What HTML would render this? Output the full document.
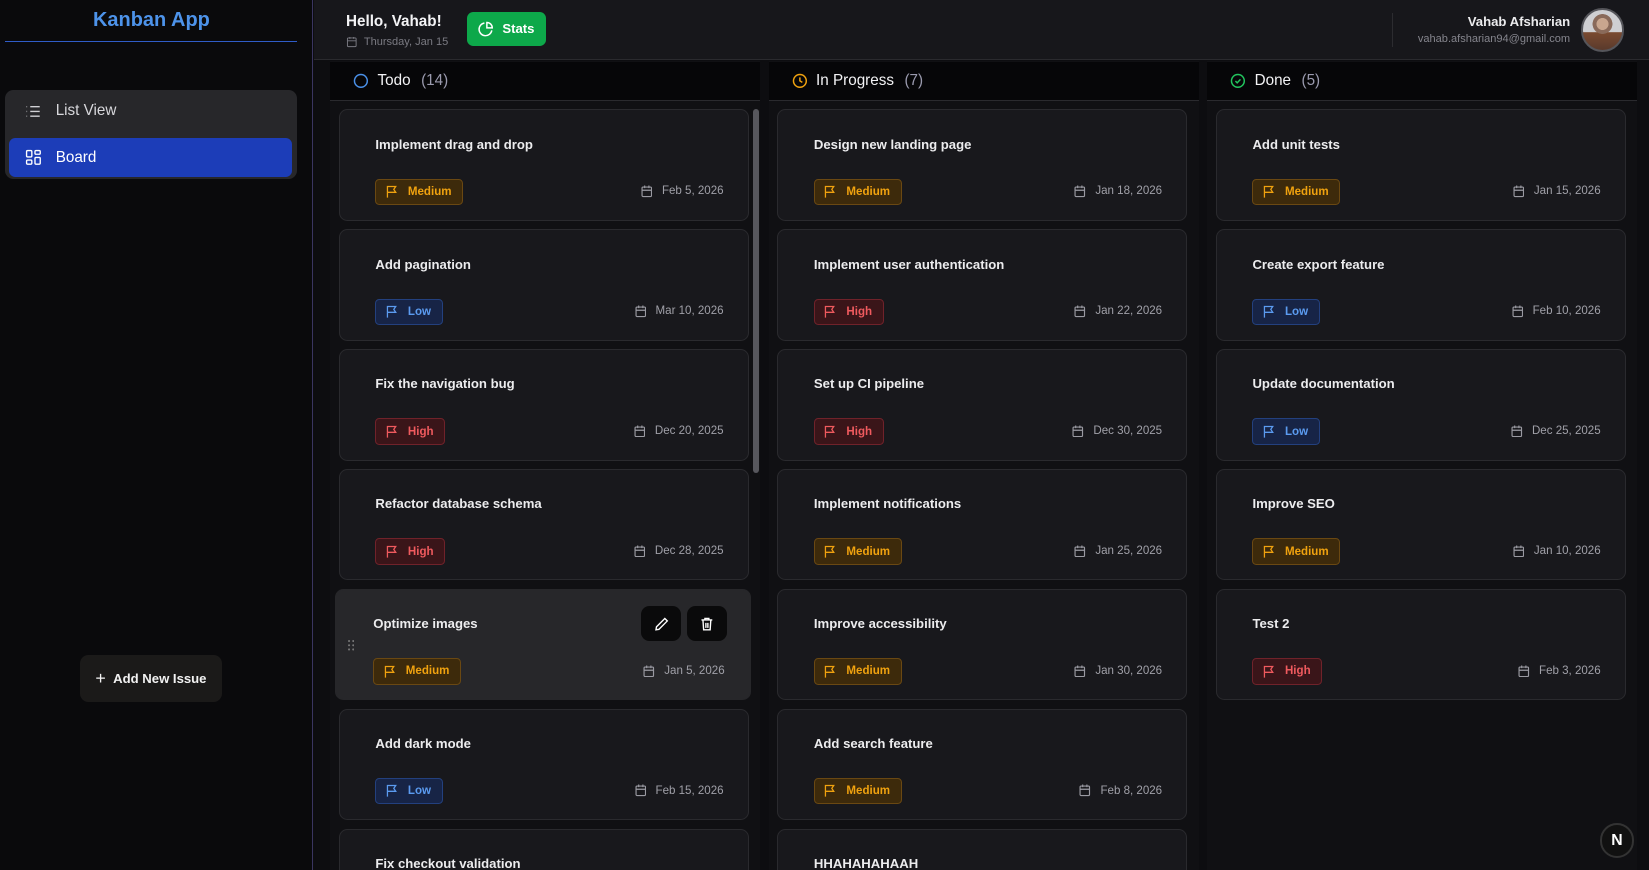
<!DOCTYPE html>
<html><head><meta charset="utf-8"><style>
*{box-sizing:border-box;margin:0;padding:0}
html,body{width:1649px;height:870px;overflow:hidden;background:#0d0d10}
body{font-family:"Liberation Sans",sans-serif;color:#e5e5e7}
#root{zoom:1.05166;width:1568px;height:827px;position:relative;overflow:hidden;background:#0d0d10}
.abs{position:absolute}
.side{left:0;top:0;width:298px;height:827px;background:#0a0a0c;border-right:1px solid #3a3560}
.logo{left:0;width:288px;top:9px;text-align:center;color:#4d93ea;font-weight:bold;font-size:19px}
.hr{left:5px;top:39px;width:277px;height:1px;background:#2f5cc8}
.nav{left:5px;top:86px;width:277px;height:84px;background:#27272a;border-radius:8px}
.navi{position:absolute;left:4px;width:269px;height:37px;border-radius:6px;font-size:14.5px;display:flex;align-items:center;padding-left:15px;gap:13px}
.add{left:76px;top:623px;width:135px;height:45px;background:#1b1a19;border-radius:8px;font-size:12.5px;font-weight:bold;color:#f2f2f2;display:flex;align-items:center;justify-content:center;gap:7px}
.head{left:299px;top:0;width:1269px;height:57px;background:#17171b;border-bottom:1px solid #2a2a2e}
.col{top:58px;width:409px;height:769px;background:#101013}
.ch{left:0;top:1px;width:100%;height:37px;background:#060608;border-bottom:1px solid #2a2a2e;display:flex;align-items:center;padding-left:22px;gap:8px;font-size:14.5px;color:#f3f3f5}
.ch .n{color:#9a9aae;margin-left:2px}
.card{position:absolute;left:8px;width:390px;height:106px;background:#18181c;border:1px solid #2a2a2e;border-radius:8px}
.t{position:absolute;left:34px;top:25px;font-size:12.5px;font-weight:bold;color:#ececee}
.b{position:absolute;left:34px;top:65px;height:25px;border-radius:4px;font-size:11px;font-weight:bold;display:flex;align-items:center;padding:0 10px 0 8px;gap:9px}
.M{background:#3d2a0b;border:1px solid #6a4812;color:#f0a20f}
.L{background:#172446;border:1px solid #23407e;color:#5b9bf0}
.H{background:#3a1519;border:1px solid #70222a;color:#ef5a5e}
.d{position:absolute;right:23px;top:71px;font-size:11px;color:#a0a0a8;display:flex;align-items:center;gap:9px}
</style></head><body><div id="root">
<div class="abs side"></div>
<div class="abs logo">Kanban App</div>
<div class="abs hr"></div>
<div class="abs nav">
 <div class="navi" style="top:1px;color:#d8d8dc"><svg width="16" height="16" viewBox="0 0 16 16" fill="none" stroke="#d0d0d4" stroke-width="1.3"><path d="M5 3.5h9M5 8h9M5 12.5h9M1.5 3.5h.5M1.5 8h.5M1.5 12.5h.5"/></svg>List View</div>
 <div class="navi" style="top:45px;background:#1c3db8;color:#fff"><svg width="16" height="16" viewBox="0 0 16 16" fill="none" stroke="#fff" stroke-width="1.3"><rect x="1.5" y="1.5" width="5" height="6" rx="1"/><rect x="9.5" y="1.5" width="5" height="3.5" rx="1"/><rect x="1.5" y="10.5" width="5" height="4" rx="1"/><rect x="9.5" y="8" width="5" height="6.5" rx="1"/></svg>Board</div>
</div>
<div class="abs add"><span style="font-size:17px;font-weight:normal">+</span>Add New Issue</div>

<div class="abs head"></div>
<div class="abs" style="left:329px;top:12px;font-size:14.5px;font-weight:bold;color:#f3f3f5">Hello, Vahab!</div>
<div class="abs" style="left:329px;top:34px;font-size:10.5px;color:#7a7a82;display:flex;align-items:center;gap:6px"><svg width="11" height="11" viewBox="0 0 12 12" fill="none" stroke="#7a7a82"><rect x="1.5" y="2" width="9" height="9" rx="1"/><path d="M1.5 5h9M4 1v2M8 1v2"/></svg>Thursday, Jan 15</div>
<div class="abs" style="left:444px;top:11px;width:75px;height:33px;background:#0da84a;border-radius:6px;display:flex;align-items:center;justify-content:center;gap:8px;font-size:12.5px;font-weight:bold;color:#fff"><svg width="15" height="15" viewBox="0 0 16 16" fill="none" stroke="#fff" stroke-width="1.5"><path d="M14 9.5A6.5 6.5 0 1 1 6.5 2"/><path d="M9 1.5A5.5 5.5 0 0 1 14.5 7H9z"/></svg>Stats</div>
<div class="abs" style="left:1324px;top:12px;width:1px;height:33px;background:#2c2c30"></div>
<div class="abs" style="right:75px;top:13px;font-size:12.5px;font-weight:bold;color:#ececee;text-align:right">Vahab Afsharian</div>
<div class="abs" style="right:75px;top:31px;font-size:10.5px;color:#85858d;text-align:right">vahab.afsharian94@gmail.com</div>
<div class="abs" style="left:1503px;top:8px;width:41px;height:41px;border-radius:50%;background:radial-gradient(circle at 50% 35%,#c9a68e 0 18%,#8a6a5a 19% 30%,transparent 31%),linear-gradient(#cfcfd2 0 55%,#7a4a30 56%,#5a3a2c);border:2px solid #55555a"></div>

<div class="abs col" style="left:314px">
 <div class="abs ch"><svg width="15" height="15" viewBox="0 0 16 16" fill="none" stroke="#4a90e8" stroke-width="1.5"><circle cx="8" cy="8" r="6.5"/></svg>Todo<span class="n">(14)</span></div>
 <div class="abs" style="left:402px;top:46px;width:6px;height:346px;background:#57575d;border-radius:3px"></div>
 <div class="card" style="top:46px"><div class="t">Implement drag and drop</div><div class="b M">Medium</div><div class="d">Feb 5, 2026</div></div>
 <div class="card" style="top:160px"><div class="t">Add pagination</div><div class="b L">Low</div><div class="d">Mar 10, 2026</div></div>
 <div class="card" style="top:274px"><div class="t">Fix the navigation bug</div><div class="b H">High</div><div class="d">Dec 20, 2025</div></div>
 <div class="card" style="top:388px"><div class="t">Refactor database schema</div><div class="b H">High</div><div class="d">Dec 28, 2025</div></div>
 <div class="card" style="top:502px;left:5px;width:395px;background:#27272a;border-color:#27272a"><div class="t" style="left:35px">Optimize images</div><div class="b M" style="left:35px">Medium</div><div class="d" style="right:24px">Jan 5, 2026</div>
  <svg class="abs" style="left:11px;top:48px" width="6" height="10" viewBox="0 0 6 10" fill="#777"><circle cx="1" cy="1" r="1"/><circle cx="5" cy="1" r="1"/><circle cx="1" cy="5" r="1"/><circle cx="5" cy="5" r="1"/><circle cx="1" cy="9" r="1"/><circle cx="5" cy="9" r="1"/></svg>
  <div class="abs" style="left:290px;top:15px;width:38px;height:34px;background:#0a0a0b;border-radius:8px;display:flex;align-items:center;justify-content:center"><svg width="15" height="15" viewBox="0 0 16 16" fill="none" stroke="#fff" stroke-width="1.4"><path d="M11 2.5l2.5 2.5L5 13.5 2 14l.5-3z"/></svg></div>
  <div class="abs" style="left:333px;top:15px;width:38px;height:34px;background:#0a0a0b;border-radius:8px;display:flex;align-items:center;justify-content:center"><svg width="15" height="15" viewBox="0 0 16 16" fill="none" stroke="#fff" stroke-width="1.4"><path d="M2.5 4h11M6 4V2.5h4V4M4 4l.7 10h6.6L12 4M7 7v5M9 7v5"/></svg></div>
 </div>
 <div class="card" style="top:616px"><div class="t">Add dark mode</div><div class="b L">Low</div><div class="d">Feb 15, 2026</div></div>
 <div class="card" style="top:730px"><div class="t">Fix checkout validation</div></div>
</div>
<div class="abs col" style="left:731px">
 <div class="abs ch"><svg width="15" height="15" viewBox="0 0 16 16" fill="none" stroke="#f0a20f" stroke-width="1.5"><circle cx="8" cy="8" r="6.5"/><path d="M8 4.5V8l2.5 1.5"/></svg>In Progress<span class="n">(7)</span></div>
 <div class="card" style="top:46px"><div class="t">Design new landing page</div><div class="b M">Medium</div><div class="d">Jan 18, 2026</div></div>
 <div class="card" style="top:160px"><div class="t">Implement user authentication</div><div class="b H">High</div><div class="d">Jan 22, 2026</div></div>
 <div class="card" style="top:274px"><div class="t">Set up CI pipeline</div><div class="b H">High</div><div class="d">Dec 30, 2025</div></div>
 <div class="card" style="top:388px"><div class="t">Implement notifications</div><div class="b M">Medium</div><div class="d">Jan 25, 2026</div></div>
 <div class="card" style="top:502px"><div class="t">Improve accessibility</div><div class="b M">Medium</div><div class="d">Jan 30, 2026</div></div>
 <div class="card" style="top:616px"><div class="t">Add search feature</div><div class="b M">Medium</div><div class="d">Feb 8, 2026</div></div>
 <div class="card" style="top:730px"><div class="t">HHAHAHAHAAH</div></div>
</div>
<div class="abs col" style="left:1148px">
 <div class="abs ch"><svg width="15" height="15" viewBox="0 0 16 16" fill="none" stroke="#22c55e" stroke-width="1.5"><circle cx="8" cy="8" r="6.5"/><path d="M5.5 8.2l1.8 1.8 3.3-3.5"/></svg>Done<span class="n">(5)</span></div>
 <div class="card" style="top:46px"><div class="t">Add unit tests</div><div class="b M">Medium</div><div class="d">Jan 15, 2026</div></div>
 <div class="card" style="top:160px"><div class="t">Create export feature</div><div class="b L">Low</div><div class="d">Feb 10, 2026</div></div>
 <div class="card" style="top:274px"><div class="t">Update documentation</div><div class="b L">Low</div><div class="d">Dec 25, 2025</div></div>
 <div class="card" style="top:388px"><div class="t">Improve SEO</div><div class="b M">Medium</div><div class="d">Jan 10, 2026</div></div>
 <div class="card" style="top:502px"><div class="t">Test 2</div><div class="b H">High</div><div class="d">Feb 3, 2026</div></div>
</div>
<div class="abs" style="left:1521px;top:783px;width:33px;height:33px;border-radius:50%;background:#111;border:2px solid #333;color:#fff;font-size:15px;font-weight:bold;display:flex;align-items:center;justify-content:center">N</div>
</div>
<script>
var flag='<svg width="13" height="13" viewBox="0 0 14 14" fill="none" stroke="currentColor" stroke-width="1.3"><path d="M2.5 13V1.5h8.5L9 4.5l2 3H2.5"/></svg>';
var cal='<svg width="11" height="12" viewBox="0 0 11 12" fill="none" stroke="#9a9aa2" stroke-width="1.1"><rect x="1" y="2" width="9" height="9" rx="1"/><path d="M1 5h9M3.5 .5v2.5M7.5 .5v2.5"/></svg>';
document.querySelectorAll('.b').forEach(function(e){e.insertAdjacentHTML('afterbegin',flag)});
document.querySelectorAll('.d').forEach(function(e){e.insertAdjacentHTML('afterbegin',cal)});
</script>
</body></html>
